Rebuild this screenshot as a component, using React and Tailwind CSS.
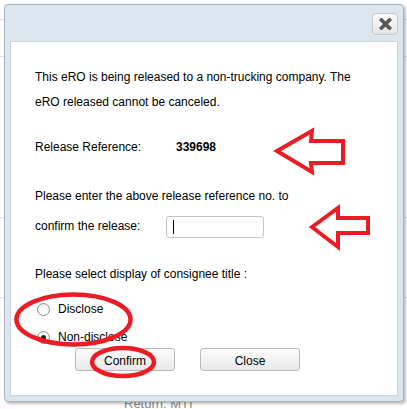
import { useState } from "react";

function Radio({ checked }) {
  return (
    <span className="flex h-[13px] w-[13px] items-center justify-center rounded-full border border-[#8f8f8f] bg-gradient-to-b from-[#f0f0f0] to-white">
      {checked && <span className="h-[5px] w-[5px] rounded-full bg-[#222]" />}
    </span>
  );
}

function Annotations() {
  return (
    <svg
      className="pointer-events-none absolute left-0 top-0"
      width="407"
      height="409"
      viewBox="0 0 407 409"
      fill="none"
      stroke="#ec1c24"
      strokeLinejoin="miter"
    >
      <path strokeWidth="4" d="M277 151 L312 131 L311 141 L343 141 L343 163 L311 163 L312 172 Z" />
      <path strokeWidth="4" d="M312 227 L338 208 L338 218 L368 218 L368 233 L338 233 L338 247 Z" />
      <ellipse strokeWidth="4.5" cx="73.5" cy="319.5" rx="57" ry="25" />
      <ellipse strokeWidth="4.5" cx="123" cy="362" rx="31" ry="14" />
    </svg>
  );
}

export default function App() {
  const [choice, setChoice] = useState("non");

  return (
    <div className="relative h-[409px] w-[407px] overflow-hidden bg-white font-['Liberation_Sans',Arial,sans-serif] text-[12px] text-black">
      {/* page behind the dialog */}
      <div className="flex flex-col">
        <div className="h-[20px] border-b border-[#e3e3e3]" />
        <div className="h-[37px] border-b border-[#e3e3e3]" />
        <div className="h-[161px] border-b border-[#e3e3e3]" />
        <div className="h-[80px] border-b border-[#e3e3e3]" />
        <div className="pl-[124px] pt-[96px] text-[13px] text-[#8a8a8a]">Return: MTI</div>
      </div>

      {/* dialog */}
      <div className="absolute left-[4px] top-[4px] flex h-[398px] w-[400px] flex-col rounded-[4px] border border-[#a9b3bd] bg-[#dce6ef] px-[5px] pb-[5px] shadow-[2px_2px_3px_rgba(0,0,0,0.25)]">
        <div className="flex h-[36px] items-start justify-end pt-[8px]">
          <button className="flex h-[22px] w-[26px] items-center justify-center rounded-[4px] border border-[#c9c9c9] bg-gradient-to-b from-[#fbfbfb] to-[#e4e4e4]">
            <svg width="13" height="12" viewBox="0 0 13 12">
              <path d="M2.5 2 L10.5 10 M10.5 2 L2.5 10" stroke="#555" strokeWidth="3.6" strokeLinecap="square" />
            </svg>
          </button>
        </div>

        <div className="flex flex-1 flex-col border border-[#c8d5e2] bg-white pl-[24px] pt-[23px] leading-[25px]">
          <p>This eRO is being released to a non-trucking company. The</p>
          <p>eRO released cannot be canceled.</p>

          <div className="mt-[20px] flex">
            <span className="w-[141px]">Release Reference:</span>
            <span className="font-bold">339698</span>
          </div>

          <p className="mt-[24px]">Please enter the above release reference no. to</p>
          <div className="mt-[5px] flex items-center">
            <span className="w-[131px]">confirm the release:</span>
            <div className="flex h-[22px] w-[98px] items-center rounded-[3px] border border-[#c4c4c4] pl-[6px]">
              <span className="h-[14px] w-px bg-black" />
            </div>
          </div>

          <p className="mt-[23px]">Please select display of consignee title :</p>

          <div className="mt-[8px] flex flex-col">
            <label className="flex h-[28px] items-center gap-[8px] pl-[2px]" onClick={() => setChoice("dis")}>
              <Radio checked={choice === "dis"} />
              <span>Disclose</span>
            </label>
            <label className="flex h-[28px] items-center gap-[8px] pl-[2px]" onClick={() => setChoice("non")}>
              <Radio checked={choice === "non"} />
              <span>Non-disclose</span>
            </label>
          </div>

          <div className="-mt-[3px] flex gap-[25px] pl-[40px]">
            <button className="h-[23px] w-[100px] rounded-[3px] border border-[#b9b9b9] bg-gradient-to-b from-[#fdfdfd] to-[#e8e8e8] text-[12px]">
              Confirm
            </button>
            <button className="h-[23px] w-[100px] rounded-[3px] border border-[#b9b9b9] bg-gradient-to-b from-[#fdfdfd] to-[#e8e8e8] text-[12px]">
              Close
            </button>
          </div>
        </div>
      </div>

      <Annotations />
    </div>
  );
}
